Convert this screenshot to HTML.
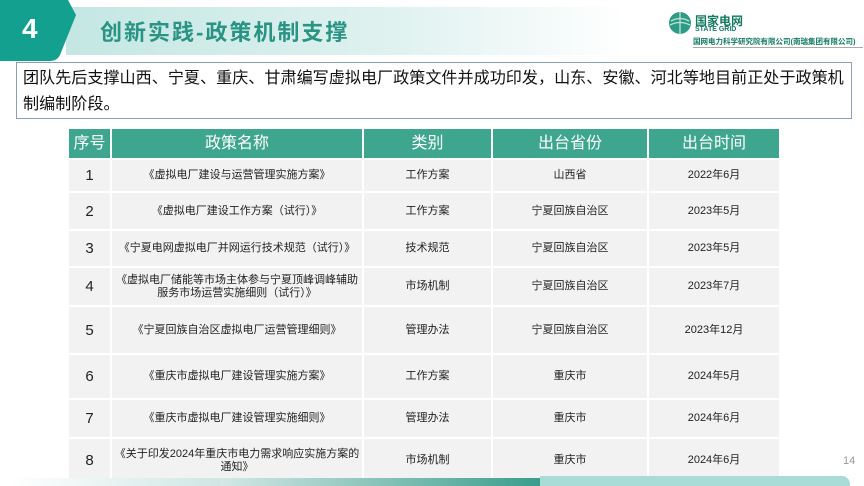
<!DOCTYPE html>
<html><head><meta charset="utf-8"><style>
*{margin:0;padding:0;box-sizing:border-box}
body{width:864px;height:486px;background:#fff;position:relative;overflow:hidden;font-family:"Liberation Sans","Noto Sans CJK SC",sans-serif}
.banner{position:absolute;left:66px;top:7px;width:560px;height:48px;background:linear-gradient(90deg,#c4e7e3 0%,#e0f2f0 60%,#fff 100%)}
.title{position:absolute;left:100px;top:15px;font-size:22px;color:#2a9484;letter-spacing:2px;font-weight:bold}
.num{position:absolute;left:22px;top:13px;font-size:28px;color:#fff;font-weight:bold}
.box{position:absolute;left:16px;top:62px;width:836px;height:57px;border:1px solid #8aa0b8;padding:2px 3px 2px 6px;font-size:16.1px;line-height:26px;color:#111}
table{position:absolute;left:67px;top:127px;width:714px;border-collapse:collapse;font-size:11px;color:#222}
td,th{border:2px solid #fff;text-align:center;background:#f2f2f2;line-height:13px}
th{background:#3ea68e;color:#fff;font-weight:normal;font-size:16px;height:31px}
td.n{font-size:15px}
.pg{position:absolute;left:843px;top:455px;font-size:11px;color:#999}
.logo{position:absolute;left:665px;top:8px}
</style></head><body>
<div class="banner"></div>
<svg style="position:absolute;left:0;top:0" width="80" height="62"><path d="M0 0H68L76 15L60 55Q57 61 50 61H0Z" fill="#14a08e"/></svg>
<div class="num">4</div>
<div class="title">创新实践-政策机制支撑</div>
<div class="logo">
<svg width="24" height="24" style="position:absolute;left:3px;top:3px"><circle cx="12" cy="12" r="11" fill="#2f9a86"/><path d="M3 10Q12 5 21 10M2 14Q12 9 22 14M12 1V23" stroke="#bfe3d8" stroke-width="1.3" fill="none"/></svg>
<div style="position:absolute;left:30px;top:4px;font-size:12px;font-weight:bold;color:#137a62;white-space:nowrap">国家电网</div>
<div style="position:absolute;left:30px;top:18px;font-size:7px;font-weight:bold;color:#137a62;white-space:nowrap">STATE GRID</div>
<div style="position:absolute;left:28px;top:28px;font-size:7.5px;font-weight:bold;color:#137a62;white-space:nowrap">国网电力科学研究院有限公司(南瑞集团有限公司)</div>
<div style="position:absolute;left:28px;top:39px;width:170px;height:1px;background:#aaa"></div>
</div>
<div class="box">团队先后支撑山西、宁夏、重庆、甘肃编写虚拟电厂政策文件并成功印发，山东、安徽、河北等地目前正处于政策机制编制阶段。</div>
<table>
<tr><th style="width:43px">序号</th><th style="width:252px">政策名称</th><th style="width:129px">类别</th><th style="width:156px">出台省份</th><th>出台时间</th></tr>
<tr style="height:33px"><td class="n">1</td><td>《虚拟电厂建设与运营管理实施方案》</td><td>工作方案</td><td>山西省</td><td>2022年6月</td></tr>
<tr style="height:38px"><td class="n">2</td><td>《虚拟电厂建设工作方案（试行）》</td><td>工作方案</td><td>宁夏回族自治区</td><td>2023年5月</td></tr>
<tr style="height:37px"><td class="n">3</td><td>《宁夏电网虚拟电厂并网运行技术规范（试行）》</td><td>技术规范</td><td>宁夏回族自治区</td><td>2023年5月</td></tr>
<tr style="height:39px"><td class="n">4</td><td>《虚拟电厂储能等市场主体参与宁夏顶峰调峰辅助服务市场运营实施细则（试行）》</td><td>市场机制</td><td>宁夏回族自治区</td><td>2023年7月</td></tr>
<tr style="height:48px"><td class="n">5</td><td>《宁夏回族自治区虚拟电厂运营管理细则》</td><td>管理办法</td><td>宁夏回族自治区</td><td>2023年12月</td></tr>
<tr style="height:45px"><td class="n">6</td><td>《重庆市虚拟电厂建设管理实施方案》</td><td>工作方案</td><td>重庆市</td><td>2024年5月</td></tr>
<tr style="height:39px"><td class="n">7</td><td>《重庆市虚拟电厂建设管理实施细则》</td><td>管理办法</td><td>重庆市</td><td>2024年6月</td></tr>
<tr style="height:45px"><td class="n">8</td><td>《关于印发2024年重庆市电力需求响应实施方案的通知》</td><td>市场机制</td><td>重庆市</td><td>2024年6月</td></tr>
</table>
<div class="pg">14</div>
<div style="position:absolute;left:10px;top:478px;width:210px;height:8px;background:linear-gradient(90deg,#fff,#cfe6e4)"></div>
<div style="position:absolute;left:220px;top:478px;width:320px;height:8px;background:linear-gradient(90deg,#d5e8e6,#3a9d8c)"></div>
<div style="position:absolute;left:540px;top:476px;width:310px;height:10px;background:#a9dcd6;border-radius:0 8px 0 0"></div>
</body></html>
